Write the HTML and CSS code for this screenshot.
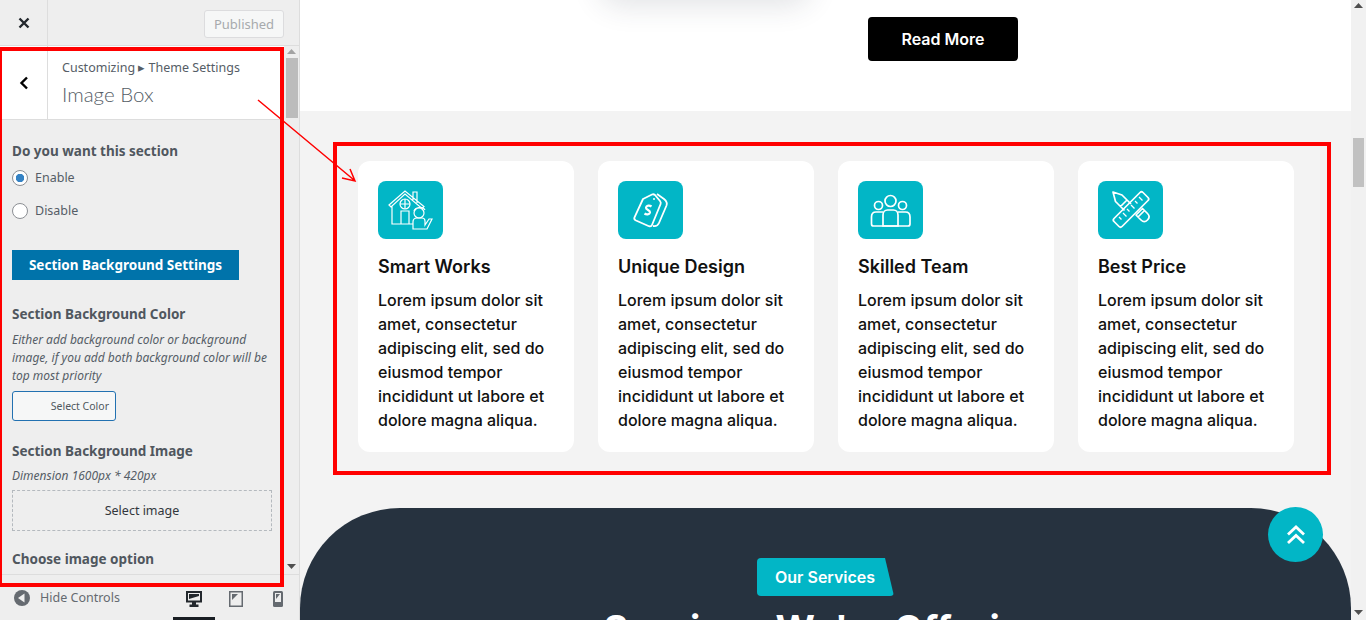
FILE: index.html
```html
<!DOCTYPE html>
<html lang="en">
<head>
<meta charset="utf-8">
<title>Customizer - Image Box</title>
<link rel="stylesheet" href="styles.css">
</head>
<body>
<div class="app">
  <aside class="sidebar">
    <header class="top-bar">
      <button class="close-btn" aria-label="Close">
        <svg width="12" height="12" viewBox="0 0 12 12"><path d="M1.5 1.5l9 9M10.5 1.5l-9 9" stroke="#23282d" stroke-width="2.4" fill="none"/></svg>
      </button>
      <button class="publish-btn">Published</button>
    </header>
    <div class="panel-wrap">
      <div class="panel">
        <div class="panel-head">
          <div class="back-btn">
            <svg width="10" height="14" viewBox="0 0 10 14"><path d="M8 1.5L2.5 7 8 12.5" stroke="#000" stroke-width="2.4" fill="none"/></svg>
          </div>
          <div class="crumbs">
            <div class="crumb-line">Customizing ▸ Theme Settings</div>
            <div class="panel-title">Image Box</div>
          </div>
        </div>
        <div class="panel-body">
          <div class="label first">Do you want this section</div>
          <label class="radio-row r1"><input type="radio" name="sec" checked><span>Enable</span></label>
          <label class="radio-row r2"><input type="radio" name="sec"><span>Disable</span></label>
          <div class="section-btn">Section Background Settings</div>
          <div class="label l2">Section Background Color</div>
          <p class="desc">Either add background color or background image, if you add both background color will be top most priority</p>
          <button class="color-btn">Select Color</button>
          <div class="label l3">Section Background Image</div>
          <p class="desc dim">Dimension 1600px * 420px</p>
          <div class="image-drop">Select image</div>
          <div class="label l4">Choose image option</div>
        </div>
      </div>
      <div class="side-scroll">
        <svg class="arrow-up" width="9" height="5" viewBox="0 0 9 5"><path d="M4.5 0L9 5H0z" fill="#a3a3a3"/></svg>
        <div class="side-thumb"></div>
        <svg class="arrow-down" width="9" height="5" viewBox="0 0 9 5"><path d="M0 0h9L4.500 5z" fill="#505050"/></svg>
      </div>
    </div>
    <footer class="foot">
      <div class="hide-controls">
        <svg width="16" height="16" viewBox="0 0 16 16"><circle cx="8" cy="8" r="8" fill="#656a70"/><path d="M10.500 3.500v9L4 8z" fill="#eee"/></svg>
        <span>Hide Controls</span>
      </div>
      <div class="devices">
        <div class="device active">
          <svg width="16" height="16" viewBox="0 0 16 16"><path d="M0 0h16v11.500H10v2h2.500V16h-9v-2.500H6v-2H0zM2 2v7.500h12V2z" fill="#23282d" fill-rule="evenodd"/><path d="M3 3h10v2L3 8z" fill="#23282d"/></svg>
        </div>
        <div class="device">
          <svg width="14" height="16" viewBox="0 0 14 16"><path d="M0 0h14v16H0zM1.500 1.500v13h11v-13z" fill="#656a70" fill-rule="evenodd"/><path d="M3 3h6L3 9z" fill="#656a70"/></svg>
        </div>
        <div class="device">
          <svg width="10" height="16" viewBox="0 0 10 16"><rect width="10" height="16" rx="1.500" fill="#656a70"/><path d="M2 2h6v9H2z" fill="#eee"/><path d="M3 3h4L3 8z" fill="#656a70"/></svg>
        </div>
      </div>
    </footer>
  </aside>

  <main class="preview">
    <div class="page">
      <section class="hero-end">
        <div class="soft-shadow"></div>
        <a class="read-more">Read More</a>
      </section>
      <section class="features">
        <article class="card">
          <div class="icon">
            <svg width="65" height="58" viewBox="0 0 65 58" fill="none" stroke="#fff" stroke-width="1.200">
              <path d="M11 24L27 10l19 15.500-2 2L27 13 13 26zM14 25v18h21M35 19v-8h4v11"/>
              <circle cx="27" cy="23" r="5"/><path d="M22 23h10M27 18v10"/>
              <path d="M23 43V30h8v13"/>
              <circle cx="41" cy="32" r="5"/><path d="M36 30c1-4 9-5 11-1"/>
              <path d="M35 48v-7c0-3 2-4 4-4h5c2 0 3 1 3 3v4l4-6h3l-5 10z"/>
            </svg>
          </div>
          <h3>Smart Works</h3>
          <p>Lorem ipsum dolor sit amet, consectetur adipiscing elit, sed do eiusmod tempor incididunt ut labore et dolore magna aliqua.</p>
        </article>
        <article class="card">
          <div class="icon">
            <svg width="65" height="58" viewBox="0 0 65 58" fill="none" stroke="#fff" stroke-width="1.800" stroke-linejoin="round">
              <path d="M25 18l9-4.500c1-.5 2-.3 3 .5l5 6c.8 1 1 2 .6 3L34 44c-.5 1.200-1.500 1.700-3 1.200L18 39.500c-1.500-.7-2-2-1.500-3.200z"/>
              <path d="M39 13l7 5c2.500 2 3.500 4 2.500 6.500L41 42c-1 2.300-3 3.500-6 3"/>
              <circle cx="36" cy="18" r="1" fill="#fff" stroke="none"/>
              <path d="M33.500 25.500c-2-1.500-5-1-5.500 1-.5 2.500 4.500 2.500 4 5-.5 2-3.500 2.500-5.500 1" stroke-width="2.200"/>
            </svg>
          </div>
          <h3>Unique Design</h3>
          <p>Lorem ipsum dolor sit amet, consectetur adipiscing elit, sed do eiusmod tempor incididunt ut labore et dolore magna aliqua.</p>
        </article>
        <article class="card">
          <div class="icon">
            <svg width="65" height="58" viewBox="0 0 65 58" fill="none" stroke="#fff" stroke-width="1.700">
              <circle cx="32.500" cy="20" r="5.500"/><circle cx="20.500" cy="24.500" r="4"/><circle cx="44.500" cy="24.500" r="4"/>
              <path d="M25 45V34c0-3 2-5 4.500-5h6c2.500 0 4.500 2 4.500 5v11z"/>
              <path d="M25 31h-7c-3 0-4.500 2-4.500 5v7c0 1.500.5 2 2 2H50c1.500 0 2-.5 2-2v-7c0-3-1.500-5-4.500-5H40"/>
            </svg>
          </div>
          <h3>Skilled Team</h3>
          <p>Lorem ipsum dolor sit amet, consectetur adipiscing elit, sed do eiusmod tempor incididunt ut labore et dolore magna aliqua.</p>
        </article>
        <article class="card">
          <div class="icon">
            <svg width="65" height="58" viewBox="0 0 65 58" fill="none" stroke="#fff" stroke-width="1.700" stroke-linejoin="round">
              <path d="M15 11l9 3 5 5-6.500 6.500-5-5zM29 19l4 4M22.500 25.500l4 4M38 34l6.500-6.500 5 5c2 2 2 4.500 0 6.500s-4.500 2-6.500 0zM40 36l6-6"/>
              <path d="M16 37.500L42 11.500c1-1 2-1 3 0l5 5c1 1 1 2 0 3L24 45.500c-1 1-2 1-3 0l-5-5c-1-1-1-2 0-3z"/>
              <path d="M21 36l2.500 2.500M25 32l3.500 3.500M29 28l2.500 2.500M33 24l3.500 3.500M37 20l2.500 2.500M41 16l3.500 3.500" stroke-width="1.300"/>
            </svg>
          </div>
          <h3>Best Price</h3>
          <p>Lorem ipsum dolor sit amet, consectetur adipiscing elit, sed do eiusmod tempor incididunt ut labore et dolore magna aliqua.</p>
        </article>
      </section>
      <section class="services">
        <div class="badge"><span>Our Services</span></div>
        <h2>Services We're Offering</h2>
      </section>
      <a class="to-top" aria-label="Back to top">
        <svg width="20" height="20" viewBox="0 0 20 20" fill="none" stroke="#fff" stroke-width="2.800"><path d="M2 9.500L10 2l8 7.500M2 18l8-7.500 8 7.500"/></svg>
      </a>
    </div>
    <div class="main-scroll">
      <svg class="arrow-up" width="9" height="5" viewBox="0 0 9 5"><path d="M4.500 0L9 5H0z" fill="#505050"/></svg>
      <div class="main-thumb"></div>
      <svg class="arrow-down" width="9" height="5" viewBox="0 0 9 5"><path d="M0 0h9L4.500 5z" fill="#505050"/></svg>
    </div>
  </main>

  <div class="note note-side"></div>
  <div class="note note-main"></div>
  <svg class="note-arrow" width="120" height="100" viewBox="0 0 120 100" fill="none" stroke="#f00" stroke-width="1.500"><path d="M8 10L104 90M92 88l13 3-5-12"/></svg>
</div>
</body>
</html>
```
FILE: styles.css
```css
* { box-sizing: border-box; }
html, body { margin: 0; height: 100%; overflow: hidden; }
body { font-family: "Noto Sans", sans-serif; color: #555d66; background: #fff; }
.app { display: flex; width: 1366px; height: 620px; position: relative; overflow: hidden; }

/* Sidebar */
.sidebar { width: 300px; flex: none; display: flex; flex-direction: column; background: #eee; border-right: 1px solid #ddd; }
.top-bar { height: 46px; flex: none; display: flex; align-items: center; justify-content: space-between; padding-right: 15px; border-bottom: 1px solid #ddd; }
.close-btn { width: 48px; height: 45px; border: 0; border-right: 1px solid #ddd; background: none; padding: 0; display: flex; align-items: center; justify-content: center; }
.publish-btn { width: 80px; height: 28px; margin-top: 2px; font: 13px "Noto Sans", sans-serif; color: #a7aaad; background: #f6f7f7; border: 1px solid #dcdcde; border-radius: 3px; padding: 0; }
.panel-wrap { flex: 1; min-height: 0; display: flex; border-bottom: 1px solid #ddd; }
.panel { width: 284px; flex: none; overflow: hidden; }
.panel-head { height: 74px; background: #fff; border-bottom: 1px solid #ddd; display: flex; }
.back-btn { width: 48px; flex: none; border-right: 1px solid #ddd; display: flex; align-items: center; justify-content: center; }
.crumbs { padding: 12px 0 0 14px; }
.crumb-line { font-size: 12.500px; line-height: 20px; color: #555d66; white-space: nowrap; }
.panel-title { font-family: Lato, sans-serif; font-weight: 300; font-size: 20.500px; line-height: 30px; margin-top: 1px; color: #555d66; }
.panel-body { padding: 0 12px; }
.label { font-size: 13.500px; font-weight: 700; line-height: 20px; color: #50575e; white-space: nowrap; }
.label.first { margin-top: 21px; }
.radio-row { display: flex; align-items: center; gap: 7px; font-size: 12.500px; line-height: 16px; height: 16px; }
.radio-row input { appearance: none; width: 16px; height: 16px; margin: 0; border: 1px solid #8c8f94; border-radius: 50%; background: #fff; flex: none; }
.radio-row input:checked { background: radial-gradient(circle, #3582c4 0 4px, #fff 4.500px); }
.r1 { margin-top: 9px; }
.r2 { margin-top: 17px; }
.section-btn { width: 227px; height: 30px; margin-top: 31px; background: #0073aa; color: #fff; font-size: 13.500px; font-weight: 700; line-height: 30px; text-align: center; white-space: nowrap; }
.l2 { margin-top: 24px; }
.desc { margin: 7px 0 0; font-size: 12px; font-style: italic; line-height: 18px; color: #555d66; }
.color-btn { display: block; width: 104px; height: 30px; margin-top: 6px; padding: 0 6px 0 0; text-align: right; font: 10.500px "Noto Sans", sans-serif; color: #50575e; background: #f6f7f7; border: 1px solid #2271b1; border-radius: 3px; }
.l3 { margin-top: 20px; }
.dim { margin-top: 6px; }
.image-drop { width: 260px; height: 41px; margin-top: 5px; border: 1px dashed #b4b9be; font-size: 12.500px; line-height: 39px; text-align: center; color: #32373c; }
.l4 { margin-top: 18px; }
.side-scroll { width: 15px; flex: none; position: relative; display: flex; flex-direction: column; align-items: center; }
.side-scroll .arrow-up { margin-top: 3px; }
.side-thumb { width: 12px; height: 60px; background: #bcbcbc; margin-top: 4px; }
.side-scroll .arrow-down { margin-top: auto; margin-bottom: 5px; }
.foot { height: 45px; flex: none; display: flex; position: relative; }
.hide-controls { display: flex; align-items: center; gap: 10px; padding-left: 14px; height: 45px; margin-top: 0; font-size: 12.500px; color: #656a70; }
.devices { display: flex; margin-left: auto; margin-right: 0; }
.device { width: 42px; height: 45px; display: flex; justify-content: center; padding-top: 16px; }
.device.active { border-bottom: 3px solid #191e23; }

/* Preview */
.preview { flex: 1; min-width: 0; display: flex; }
.page { flex: 1; min-width: 0; position: relative; overflow: hidden; background: #f3f3f3; font-family: Inter, sans-serif; }
.hero-end { height: 111px; background: #fff; position: relative; display: flex; justify-content: center; padding-left: 235px; overflow: hidden; }
.soft-shadow { position: absolute; left: 300px; top: -60px; width: 210px; height: 60px; box-shadow: 0 5px 30px rgba(40, 50, 70, 0.14); border-radius: 20px; }
.read-more { width: 150px; height: 44px; margin-top: 17px; background: #000; color: #fff; border-radius: 4px; font-size: 16px; font-weight: 600; line-height: 44px; text-align: center; }
.features { display: grid; grid-template-columns: repeat(4, 216px); gap: 24px; padding: 50px 0 0 58px; }
.card { background: #fff; border-radius: 12px; padding: 20px; height: 291px; }
.icon { width: 65px; height: 58px; background: #02b6c6; border-radius: 8px; }
.card h3 { margin: 17px 0 0; font-size: 18px; font-weight: 600; line-height: 22px; color: #111; }
.card p { margin: 10px 0 0; font-size: 16px; font-weight: 500; line-height: 24px; color: #111; }
.services { height: 200px; margin-top: 56px; background: #26323f; border-radius: 100px 100px 0 0; display: flex; flex-direction: column; align-items: center; padding-top: 50px; }
.badge { width: 137px; height: 38px; margin-left: 0; background: #02b6c6; color: #fff; font-size: 16px; font-weight: 600; line-height: 38px; padding-left: 18px; clip-path: polygon(0 0, 128px 0, 137px 38px, 0 38px); border-radius: 4px; }
.services h2 { margin: 8px 0 0; font-size: 38px; font-weight: 700; line-height: 50px; color: #fff; white-space: nowrap; }
.to-top { position: absolute; left: 968px; top: 507px; width: 55px; height: 55px; border-radius: 50%; background: #02b6c6; display: flex; align-items: center; justify-content: center; }
.main-scroll { width: 15px; flex: none; background: #f1f1f1; display: flex; flex-direction: column; align-items: center; position: relative; }
.main-scroll .arrow-up { margin-top: 3px; }
.main-thumb { position: absolute; top: 138px; left: 2px; width: 11px; height: 49px; background: #c1c1c1; }
.main-scroll .arrow-down { margin-top: auto; margin-bottom: 5px; }

/* Annotations */
.note { position: absolute; border: 4px solid #f00; pointer-events: none; }
.note-side { left: -2px; top: 47px; width: 286px; height: 540px; }
.note-main { left: 333px; top: 142px; width: 998px; height: 333px; }
.note-arrow { position: absolute; left: 250px; top: 90px; pointer-events: none; }
```
